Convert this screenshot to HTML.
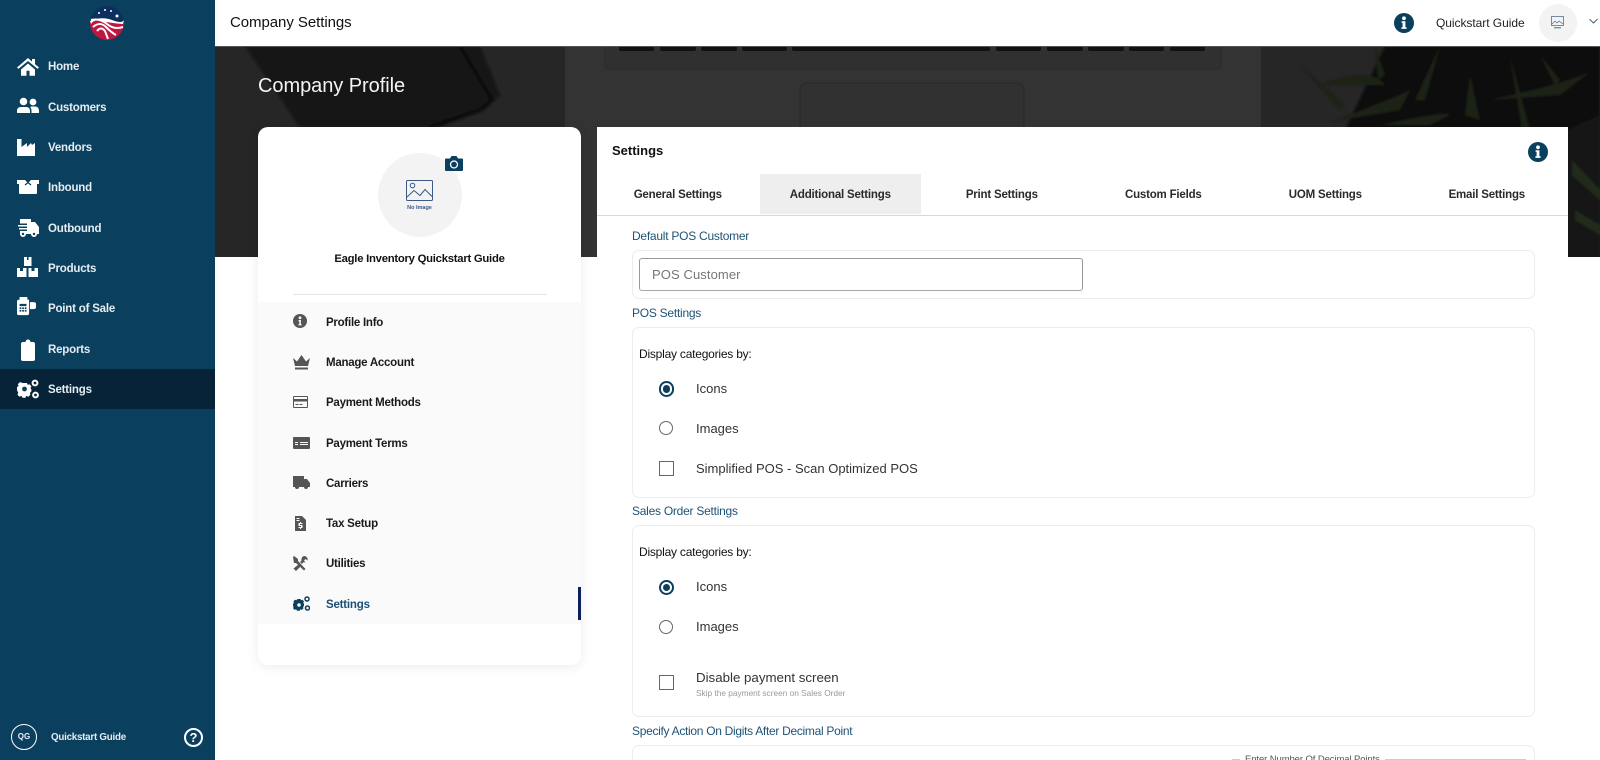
<!DOCTYPE html>
<html><head><meta charset="utf-8"><title>Company Settings</title>
<style>
html,body{margin:0;padding:0;width:1600px;height:760px;overflow:hidden;background:#fff;font-family:"Liberation Sans",sans-serif;position:relative}
.a{position:absolute;white-space:nowrap;line-height:16px}
#side{position:absolute;left:0;top:0;width:215px;height:760px;background:#0a3f5e}
.nav{position:absolute;left:48px;margin-top:1px;color:#e6ecf0;font-size:11.500px;font-weight:bold;letter-spacing:-.2px;line-height:16px;white-space:nowrap}
.ni{position:absolute;left:17px;width:22px;height:22px;fill:#fff}
.mi{position:absolute;left:326px;margin-top:1px;color:#1a1a1a;font-size:11.500px;font-weight:bold;letter-spacing:-.25px;line-height:16px;white-space:nowrap}
.mic{position:absolute;left:292px;width:18px;height:18px;fill:#555}
.tab{position:absolute;top:175px;height:40px;width:161.600px;text-align:center;font-size:11.500px;font-weight:bold;color:#2a2a2a;line-height:40px;letter-spacing:-.2px}
.lbl{position:absolute;left:632px;color:#1f5275;font-size:12px;letter-spacing:-.25px;line-height:16px;white-space:nowrap}
.box{position:absolute;left:632px;width:901px;background:#fff;border:1px solid #ececec;border-radius:7px;box-sizing:content-box}
.t13{position:absolute;left:696px;color:#333;font-size:13px;line-height:16px;white-space:nowrap;letter-spacing:0}
.dc{position:absolute;left:639px;color:#111;font-size:12px;letter-spacing:-.22px;line-height:16px;white-space:nowrap}
.r{position:absolute;left:658.500px;width:12px;height:12px;border:1.800px solid #666;border-radius:50%}
.rs{border:2px solid #0a3f5e;width:11.600px;height:11.600px}
.rs:after{content:"";position:absolute;left:2px;top:2px;width:7.600px;height:7.600px;border-radius:50%;background:#0a3f5e}
.c{position:absolute;left:658.500px;width:13px;height:13px;border:1.800px solid #666}
</style></head><body>

<!-- hero -->
<svg class="a" style="left:215px;top:46px" width="1385" height="211" viewBox="215 46 1385 211">
<defs><filter id="b"><feGaussianBlur stdDeviation="1"/></filter></defs>
<rect x="215" y="46" width="350" height="211" fill="#262626"/>
<g filter="url(#b)">
<path d="M245 46L480 46L500 95L485 110L440 127L300 127Z" fill="#171717"/>
<path d="M460 46L492 100L480 110L430 127" fill="none" stroke="#0c0c0c" stroke-width="4"/>
</g>
<rect x="565" y="46" width="696" height="211" fill="#333"/>
<path d="M605 46V66Q605 69 610 69H1215Q1221 69 1221 64V46" fill="#303030" stroke="#2a2a2a"/>
<g fill="#101010"><rect x="619" y="46" width="35" height="5" rx="2"/><rect x="660" y="46" width="36" height="5" rx="2"/><rect x="701" y="46" width="36" height="5" rx="2"/><rect x="742" y="46" width="45" height="5" rx="2"/><rect x="792" y="46" width="198" height="5" rx="2"/><rect x="996" y="46" width="45" height="5" rx="2"/><rect x="1047" y="46" width="36" height="5" rx="2"/><rect x="1088" y="46" width="36" height="5" rx="2"/><rect x="1129" y="46" width="35" height="5" rx="2"/><rect x="1170" y="46" width="35" height="5" rx="2"/></g>
<rect x="800" y="83" width="224" height="100" rx="8" fill="#313131" stroke="#282828"/>
<rect x="1261" y="46" width="339" height="211" fill="#262626"/>
<g filter="url(#b)">
<path d="M1385 46H1600V120L1568 257H1360L1345 130Z" fill="#0f110e"/>
<path d="M1300 65L1345 105L1340 110ZM1320 85Q1370 65 1385 85L1365 85ZM1330 122Q1390 100 1410 90L1400 110ZM1375 46L1385 75L1378 80ZM1440 46L1425 100L1415 100ZM1470 75L1465 115L1480 120ZM1510 56L1530 130L1522 130ZM1490 100Q1560 85 1590 72L1560 95ZM1380 125Q1450 110 1450 115L1430 125ZM1540 55L1560 80L1555 85Z" fill="#1a2114"/>
<path d="M1568 130L1600 115V257H1568Z" fill="#171915"/>
<path d="M1572 160L1600 190V200L1572 175ZM1575 210L1600 225V235L1575 220Z" fill="#232a1b"/>
</g>
</svg>
<div class="a" style="left:258px;top:74px;color:#f4f4f4;font-size:20px;line-height:24px;letter-spacing:-.05px">Company Profile</div>

<!-- topbar -->
<div class="a" style="left:215px;top:0;width:1385px;height:47px;background:#fff;border-bottom:1px solid #555;box-sizing:border-box"></div>
<div class="a" style="left:230px;top:14px;color:#111;font-size:15px;line-height:18px;letter-spacing:-.06px">Company Settings</div>
<svg class="a" style="left:1394px;top:13px" width="20" height="20" viewBox="0 0 20 20"><circle cx="10" cy="10" r="10" fill="#0a3f5e"/><circle cx="10" cy="5.300" r="1.900" fill="#fff"/><path d="M7.600 8.300h3.800v6h1.200v1.600H7.400v-1.600h1.200V9.900h-1z" fill="#fff"/></svg>
<div class="a" style="left:1436px;top:15px;color:#222;font-size:12px;letter-spacing:-.05px">Quickstart Guide</div>
<div class="a" style="left:1539px;top:4px;width:38px;height:38px;border-radius:50%;background:#f3f3f3"></div>
<svg class="a" style="left:1551px;top:16px" width="14" height="14" viewBox="0 0 14 14"><rect x=".5" y=".5" width="12" height="9" fill="none" stroke="#3d5f86" stroke-width=".7"/><path d="M1 8l3-3 2 2 2-2 4 3" fill="none" stroke="#3d5f86" stroke-width=".6"/><rect x="3" y="11" width="7" height="1.400" fill="#7c8fa8"/></svg>
<svg class="a" style="left:1589px;top:18px" width="9" height="7" viewBox="0 0 9 7"><path d="M.5 1l4 4 4-4" fill="none" stroke="#0a3f5e" stroke-width=".8"/></svg>

<!-- sidebar -->
<div id="side"></div>
<svg class="a" style="left:90px;top:6px" width="34" height="34" viewBox="0 0 34 34"><circle cx="17" cy="17" r="17" fill="#0d2f5e"/><path d="M0 17Q8 12 14 15Q24 18 34 17A17 17 0 0 1 0 17Z" fill="#c0163f"/><path d="M1 14Q10 12 17 18T33 21M3 21Q10 15 16 21T26 29M7 25Q11 20 15 25L18 33" fill="none" stroke="#fff" stroke-width="2"/><path d="M0 15Q12 10 22 14T34 14L33 18Q20 17 12 15T1 18Z" fill="#fff"/><g fill="#fff"><circle cx="9" cy="7" r="1"/><circle cx="15" cy="4" r="1"/><circle cx="21" cy="5" r="1"/><circle cx="27" cy="10" r="1.500"/></g></svg>

<div class="a" style="left:0;top:369px;width:215px;height:40px;background:#062338"></div>

<svg class="ni" style="top:55px" viewBox="0 0 22 22"><path d="M11 3L0 12.500l1.400 1.400L11 6l9.600 7.900 1.400-1.400-4-3.400V4h-3v2.600zM4 14.500v6.300h5.500v-5h3v5H18v-6.300L11 8.500z"/></svg>
<div class="nav" style="top:58px">Home</div>
<svg class="ni" style="top:96px" viewBox="0 0 22 22"><circle cx="6.500" cy="5.500" r="3.800"/><circle cx="16" cy="6" r="3.400"/><path d="M0 17V15q0-4 4-4h5q4 0 4 4v2zM14.500 17V15q0-2.500-1.300-4 1-.5 1.800-.5h3q4 0 4 4.500v2z"/></svg>
<div class="nav" style="top:99px">Customers</div>
<svg class="ni" style="top:136px" viewBox="0 0 22 22"><path d="M0 3h4.500v8L10 7v4l4-4 1 2 3-2v13H0z"/></svg>
<div class="nav" style="top:139px">Vendors</div>
<svg class="ni" style="top:176px" viewBox="0 0 22 22"><path d="M0 4h8l3 3 3-3h8v4h-2v9q0 1-1 1H3q-1 0-1-1V8H0z"/><path d="M8 9l3-2.500 3 2.500" fill="none" stroke="#0a3f5e" stroke-width="1.200"/></svg>
<div class="nav" style="top:179px">Inbound</div>
<svg class="ni" style="top:217px" viewBox="0 0 22 22"><path d="M3 2h11v3h4l4 5v7h-2a3 3 0 0 1-6 0H9a3 3 0 0 1-6 0V14h7v-1.500H2V11h8V9.500H1V8h9V6.500H3z"/><circle cx="6" cy="17" r="1.200" fill="#0a3f5e"/><circle cx="17" cy="17" r="1.200" fill="#0a3f5e"/></svg>
<div class="nav" style="top:220px">Outbound</div>
<svg class="ni" style="top:257px" viewBox="0 0 22 22"><path d="M7 0h3v3h1.500V0H14.500v9H7zM0 11h3v3h3v-3h3.500v9H0zM11.500 11h3v3h3v-3H21v9h-9.500z"/></svg>
<div class="nav" style="top:260px">Products</div>
<svg class="ni" style="top:297px;width:19px;height:19px" viewBox="0 0 22 22"><path d="M3 0h9v3h2v16q0 2-2 2H2q-2 0-2-2V5q0-2 3-2zM15 6h4q3 0 3 2v4q0 2-3 2h-4z"/><path d="M3 8h8v2.500H3zM3 12h2v2H3zM6 12h2v2H6zM9 12h2v2H9zM3 15h2v2H3zM6 15h2v2H6zM9 15h2v2H9z" fill="#0a3f5e"/></svg>
<div class="nav" style="top:300px">Point of Sale</div>
<svg class="ni" style="top:339px" viewBox="0 0 22 22"><path d="M6 3h2.500a2.500 2.500 0 0 1 5 0H16q2 0 2 2v15q0 2-2 2H6q-2 0-2-2V5Q4 3 6 3z"/></svg>
<div class="nav" style="top:341px">Reports</div>
<svg class="ni" style="top:379px" viewBox="0 0 22 22"><path d="M6 4h4l.6 1.800 1.800-.6 2 2-1 2 1 1-.1 2.500-1.400 1 .5 2-2 2-2-.8-1 1.900H5.500l-1-1.900-2 .8-2-2 .7-2L0 11V8l1.600-.9-.7-2 2-2 2 .7z"/><circle cx="7.500" cy="10" r="2.400" fill="#0a3f5e"/><circle cx="18" cy="4" r="2.400" fill="none" stroke="#fff" stroke-width="2"/><circle cx="18.500" cy="16" r="2.400" fill="none" stroke="#fff" stroke-width="2"/></svg>
<div class="nav" style="top:381px">Settings</div>

<div class="a" style="left:11px;top:724px;width:24px;height:24px;border:1.500px solid #fff;border-radius:50%;color:#eef;font-size:8px;font-weight:bold;text-align:center;line-height:24px">QG</div>
<div class="a" style="left:51px;top:730px;color:#e6ecf0;font-size:9.800px;font-weight:bold;letter-spacing:-.25px">Quickstart Guide</div>
<div class="a" style="left:184px;top:728px;width:15px;height:15px;border:2px solid #fff;border-radius:50%;color:#fff;font-size:13px;font-weight:bold;text-align:center;line-height:15px">?</div>

<!-- left card -->
<div class="a" style="left:258px;top:127px;width:323px;height:538px;background:#fff;border-radius:10px;box-shadow:0 2px 12px rgba(0,0,0,.08)"></div>
<div class="a" style="left:377.500px;top:153px;width:84px;height:84px;border-radius:50%;background:#f3f3f3"></div>
<svg class="a" style="left:445px;top:156px" width="18" height="15" viewBox="0 0 18 15"><path d="M1 2.500h4L6.500 0h5L13 2.500h4q1 0 1 1V14q0 1-1 1H1q-1 0-1-1V3.500q0-1 1-1z" fill="#0a3f5e"/><circle cx="9" cy="8.500" r="3.500" fill="none" stroke="#fff" stroke-width="1.300"/></svg>
<svg class="a" style="left:406px;top:180px" width="27" height="22" viewBox="0 0 27 22"><rect x=".5" y=".5" width="26" height="20" rx="1" fill="none" stroke="#3d5a85"/><circle cx="6.500" cy="5.500" r="2.300" fill="none" stroke="#3d5a85"/><path d="M1 17l7-6.500 6 5 5-6 7 7" fill="none" stroke="#3d5a85"/></svg>
<div class="a" style="left:394.500px;top:203px;width:50px;text-align:center;color:#3d5a85;font-size:5.500px;font-weight:bold;line-height:10px">No Image</div>
<div class="a" style="left:258px;top:251px;width:323px;text-align:center;color:#111;font-size:11.300px;font-weight:bold;letter-spacing:-.25px">Eagle Inventory Quickstart Guide</div>
<div class="a" style="left:293px;top:294px;width:254px;height:1px;background:#e6e6e6"></div>
<div class="a" style="left:258px;top:302px;width:323px;height:322px;background:#fafafa"></div>
<div class="a" style="left:578px;top:587px;width:3px;height:33px;background:#0b1f5a"></div>

<svg class="mic" style="top:314px;left:293px;width:14px;height:14px" viewBox="0 0 14 14"><circle cx="7" cy="7" r="7"/><circle cx="7" cy="3.800" r="1.400" fill="#fafafa"/><path d="M5.500 6h2.400v4.200h.8v1.200H5.400v-1.200h.9V7.200h-.8z" fill="#fafafa"/></svg>
<div class="mi" style="top:314px">Profile Info</div>
<svg class="mic" style="top:355px;left:293px;width:17px;height:15px" viewBox="0 0 17 15"><path d="M0 3l4 3.500L8.500 0 13 6.500 17 3l-2 8H2zM2 12.500h13V14.500H2z"/></svg>
<div class="mi" style="top:354px">Manage Account</div>
<svg class="mic" style="top:396px;left:293px;width:15px;height:12px" viewBox="0 0 15 12"><path d="M1 0h13q1 0 1 1v10q0 1-1 1H1q-1 0-1-1V1q0-1 1-1zM1 1v2h13V1zM1 5.500V11h13V5.500zM2.500 8h3v1h-3zM6.500 8h3v1h-3z" fill-rule="evenodd"/></svg>
<div class="mi" style="top:394px">Payment Methods</div>
<svg class="mic" style="top:437px;left:293px;width:17px;height:12px" viewBox="0 0 17 12"><rect width="17" height="12" rx="1"/><path d="M2 5h3v1H2zM2 7h3v1H2zM7 5h8v1H7zM7 7h8v1H7z" fill="#fafafa"/></svg>
<div class="mi" style="top:435px">Payment Terms</div>
<svg class="mic" style="top:476px;left:293px;width:17px;height:13px" viewBox="0 0 17 13"><path d="M0 0h11v3h3l3 4v4h-2a2 2 0 0 1-4 0H6a2 2 0 0 1-4 0H0z"/></svg>
<div class="mi" style="top:475px">Carriers</div>
<svg class="mic" style="top:516px;left:295px;width:11px;height:15px" viewBox="0 0 11 15"><path d="M0 0h7l4 4v11H0z"/><path d="M5 6h1v1h1.500v1H5v1h2.500v3H6v1H5v-1H3.500v-1H6v-1H3.500V7H5z" fill="#fafafa"/><path d="M1.500 2h3v1h-3zM1.500 4h3v1h-3z" fill="#fafafa"/></svg>
<div class="mi" style="top:515px">Tax Setup</div>
<svg class="mic" style="top:556px;left:293px;width:15px;height:15px" viewBox="0 0 15 15"><path d="M1 0l4 3v2l7.500 8-1.500 1.500-8-7.500H1L0 1zM11 0a3.500 3.500 0 0 1 3.500 4.500L12.500 3 11 4.500l1.500 2-2-.2L9 8 7 6l1.500-1.500Q8 1 11 0zM5.500 8.500l2 2L3 15 .5 12.500z"/></svg>
<div class="mi" style="top:555px">Utilities</div>
<svg class="mic" style="top:596px;left:293px;width:17px;height:15px;fill:#0a3f5e" viewBox="0 0 17 15"><path d="M4.500 3h3l.5 1.300 1.400-.5 1.600 1.600-.8 1.600.8.800v2.200l-1 .8.500 1.500-1.600 1.600-1.500-.6-.8 1.500H4l-.8-1.500-1.500.6L.1 12.300l.5-1.500L0 10V7.700l1-.8-.6-1.500L2 3.800l1.500.5z"/><circle cx="6" cy="9" r="1.800" fill="#fafafa"/><circle cx="14" cy="3" r="2" fill="none" stroke="#0a3f5e" stroke-width="1.500"/><circle cx="14.500" cy="12" r="2" fill="none" stroke="#0a3f5e" stroke-width="1.500"/></svg>
<div class="mi" style="top:596px;color:#1b4f75;letter-spacing:-.2px">Settings</div>

<!-- settings card -->
<div class="a" style="left:597px;top:127px;width:971px;height:633px;background:#fff"></div>
<div class="a" style="left:612px;top:143px;color:#111;font-size:13px;font-weight:bold">Settings</div>
<svg class="a" style="left:1528px;top:142px" width="20" height="20" viewBox="0 0 20 20"><circle cx="10" cy="10" r="10" fill="#0a3f5e"/><circle cx="10" cy="5.300" r="1.900" fill="#fff"/><path d="M7.600 8.300h3.800v6h1.200v1.600H7.400v-1.600h1.200V9.900h-1z" fill="#fff"/></svg>
<div class="a" style="left:597px;top:214.500px;width:971px;height:1.500px;background:#d8d8d8"></div>
<div class="a" style="left:760px;top:174px;width:161px;height:40px;background:#eee"></div>
<div class="tab" style="left:597px">General Settings</div>
<div class="tab" style="left:759.500px">Additional Settings</div>
<div class="tab" style="left:921px">Print Settings</div>
<div class="tab" style="left:1082.500px">Custom Fields</div>
<div class="tab" style="left:1244.500px">UOM Settings</div>
<div class="tab" style="left:1406px">Email Settings</div>

<div class="lbl" style="top:228px">Default POS Customer</div>
<div class="box" style="top:250px;height:47px"></div>
<div class="a" style="left:639px;top:258px;width:444px;height:33px;border:1px solid #999;border-bottom:1.500px solid #aaa;border-radius:3px;box-sizing:border-box;background:#fff"></div>
<div class="a" style="left:652px;top:267px;color:#777;font-size:13px;letter-spacing:.1px">POS Customer</div>

<div class="lbl" style="top:305px">POS Settings</div>
<div class="box" style="top:327px;height:169px"></div>
<div class="dc" style="top:346px">Display categories by:</div>
<div class="r rs" style="top:381px"></div><div class="t13" style="top:381px">Icons</div>
<div class="r" style="top:421px"></div><div class="t13" style="top:421px">Images</div>
<div class="c" style="top:461px"></div><div class="t13" style="top:461px">Simplified POS - Scan Optimized POS</div>

<div class="lbl" style="top:503px">Sales Order Settings</div>
<div class="box" style="top:525px;height:190px"></div>
<div class="dc" style="top:544px">Display categories by:</div>
<div class="r rs" style="top:579.500px"></div><div class="t13" style="top:579px">Icons</div>
<div class="r" style="top:620px"></div><div class="t13" style="top:619px">Images</div>
<div class="c" style="top:675px"></div><div class="t13" style="top:670px;font-size:13.300px">Disable payment screen</div>
<div class="a" style="left:696px;top:685px;color:#999;font-size:8.300px">Skip the payment screen on Sales Order</div>

<div class="lbl" style="top:723px;letter-spacing:-.3px">Specify Action On Digits After Decimal Point</div>
<div class="box" style="top:745px;height:40px"></div>
<div class="a" style="left:1232px;top:759px;width:294px;height:1px;background:#ccc"></div>
<div class="a" style="left:1240px;top:752px;padding:0 5px;background:#fff;color:#555;font-size:9.500px;letter-spacing:-.1px">Enter Number Of Decimal Points</div>
</body></html>
